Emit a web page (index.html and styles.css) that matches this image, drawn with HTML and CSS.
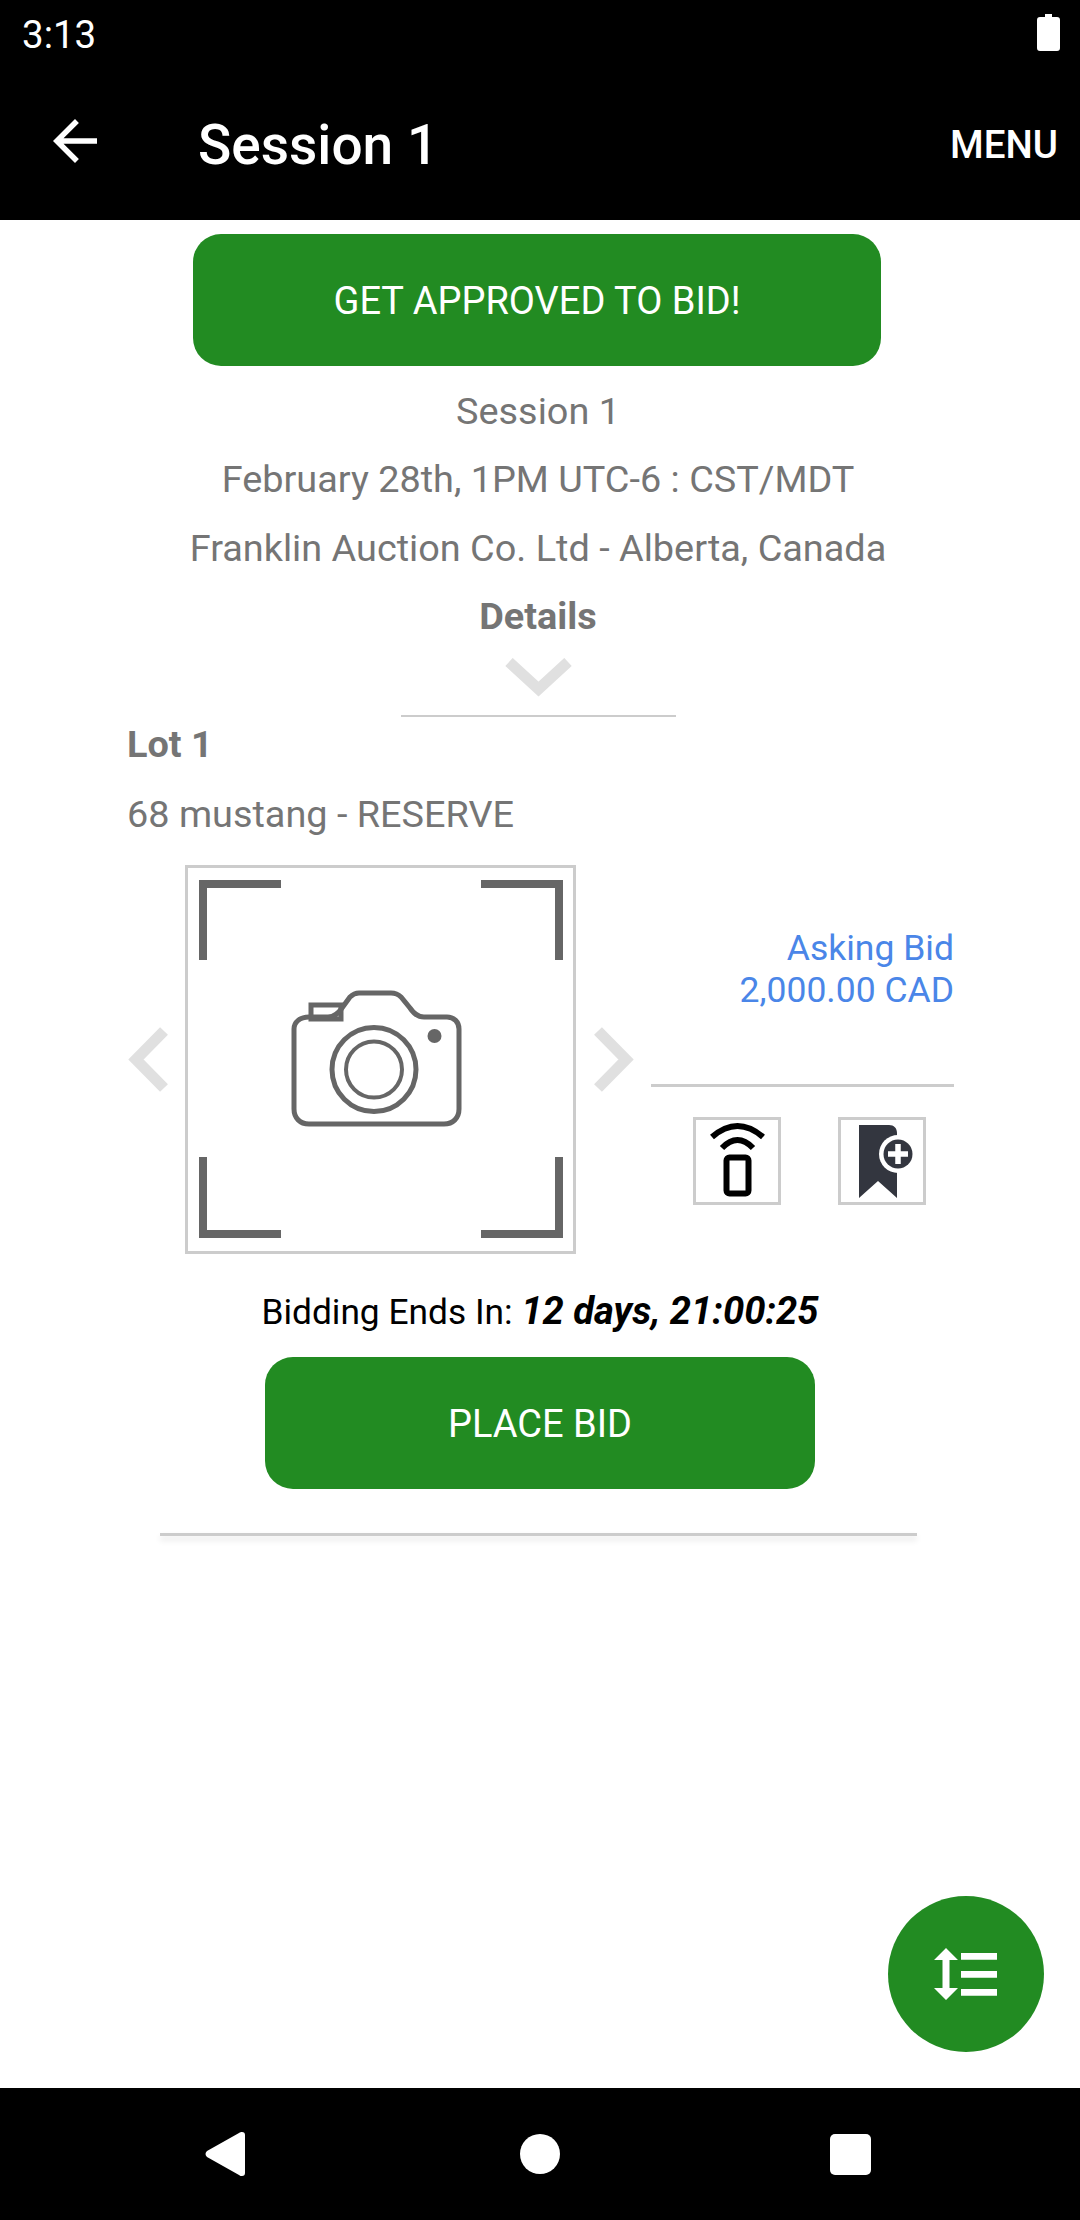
FILE: index.html
```html
<!DOCTYPE html>
<html lang="en">
<head>
<meta charset="utf-8">
<title>Session 1</title>
<link rel="stylesheet" href="styles.css">
</head>
<body>
<div class="page">
  <header class="header">
    <div class="status">
      <span class="time">3:13</span>
      <svg class="battery" viewBox="0 0 23 37"><path d="M8 0h7v3h5a3 3 0 0 1 3 3v28a3 3 0 0 1-3 3H3a3 3 0 0 1-3-3V6a3 3 0 0 1 3-3h5z"/></svg>
    </div>
    <div class="toolbar">
      <svg class="back" viewBox="0 0 24 24"><path d="M20 11H7.830l5.590-5.590L12 4l-8 8 8 8 1.410-1.410L7.830 13H20v-2z"/></svg>
      <span class="title">Session 1</span>
      <span class="menu">MENU</span>
    </div>
  </header>

  <main class="main">
    <div class="btn btn-approve">GET APPROVED TO BID!</div>
    <div class="info">
      <div class="info-row">Session 1</div>
      <div class="info-row">February 28th, 1PM UTC-6 : CST/MDT</div>
      <div class="info-row">Franklin Auction Co. Ltd - Alberta, Canada</div>
      <div class="info-row info-bold">Details</div>
      <svg class="chev-down" viewBox="0 0 67 40"><path d="M4 4l29.500 27L63 4"/></svg>
      <div class="info-line"></div>
    </div>

    <section class="lot">
      <div class="lot-name">Lot 1</div>
      <div class="lot-desc">68 mustang - RESERVE</div>
      <div class="gallery">
        <svg class="chev-side" viewBox="0 0 40 65"><path d="M36 4L8 32.500 36 61"/></svg>
        <div class="photo">
          <svg class="photo-art" viewBox="188 868 385 383">
            <path class="corner" d="M281 884H203V960M481 884H559V960M203 1157V1234H281M559 1157V1234H481"/>
            <path class="cam" d="M311 1005h30v14h-30z"/>
            <path class="cam" d="M309 1017h19c6 0 10-3 14-9l8-11c3-3 5-4 9-4h32c4 0 7 1 10 4l9 11c4 6 8 9 14 9h23c7 0 12 5 12 12v80c0 9-6 15-15 15H309c-9 0-15-6-15-15v-80c0-7 6-12 15-12z"/>
            <circle class="cam" cx="374" cy="1069.500" r="42"/>
            <circle class="cam cam-thin" cx="374" cy="1069.500" r="28"/>
            <circle class="cam-dot" cx="434.500" cy="1036" r="7"/>
          </svg>
        </div>
        <svg class="chev-side" viewBox="0 0 40 65"><path d="M4 4l28 28.500L4 61"/></svg>
        <div class="side">
          <div class="bid">
            <div>Asking Bid</div>
            <div>2,000.00 CAD</div>
          </div>
          <div class="side-line"></div>
          <div class="tools">
            <div class="tool">
              <svg class="tool-icon" viewBox="0 0 82 82">
                <path class="remote" d="M16 17Q41.500-5 67 17M26 28Q41.500 12 57 28"/>
                <rect class="remote" x="30.500" y="37.500" width="22" height="36" rx="3"/>
              </svg>
            </div>
            <div class="tool">
              <svg class="tool-icon" viewBox="0 0 82 82">
                <path class="mark" d="M18 5h30c5 0 8 3 8 8v65L37 61 18 78z"/>
                <circle class="mark-ring" cx="57" cy="34" r="19"/>
                <circle class="mark" cx="57" cy="34" r="14.500"/>
                <path class="mark-plus" d="M47 34h20M57 24v20"/>
              </svg>
            </div>
          </div>
        </div>
      </div>
      <div class="ends">Bidding Ends In: <b class="ends-left"><i>12 days, 21:00:25</i></b></div>
      <div class="btn btn-place">PLACE BID</div>
      <div class="lot-line"></div>
    </section>

    <div class="fab">
      <svg class="fab-icon" viewBox="0 0 63 52">
        <path d="M12 0l12 12h-8.500v28H24L12 52 0 40h8.500V12H0z"/>
        <path d="M27 5h36v6.700H27zM27 23h36v6.700H27zM27 41h36v6.700H27z"/>
      </svg>
    </div>
  </main>

  <nav class="nav">
    <svg class="nav-back" viewBox="0 0 40 44"><path d="M37 0c2 0 3 1 3 3v38c0 2-1 3-3 3-1 0-2 0-3-1L2 25c-2-2-2-4 0-6L34 1c1-1 2-1 3-1z"/></svg>
    <span class="nav-home"></span>
    <span class="nav-recent"></span>
  </nav>
</div>
</body>
</html>
```

FILE: styles.css
```css
* { box-sizing: border-box; }
html, body { margin: 0; padding: 0; background: #fff; }
body { font-family: Roboto, "Noto Sans", sans-serif; }
.page { width: 1080px; height: 2220px; display: flex; flex-direction: column; overflow: hidden; }

.header { background: #000; color: #fff; height: 220px; flex: none; }
.status { height: 66px; display: flex; justify-content: space-between; align-items: center; padding: 0 20px 0 22px; }
.time { font-size: 38.500px; padding-top: 2px; }
.battery { width: 23px; height: 37px; fill: #fff; margin-top: -1px; }
.toolbar { height: 154px; display: flex; align-items: center; }
.back { width: 66px; height: 66px; fill: #fff; margin-left: 42px; margin-top: -4px; flex: none; }
.title { font-size: 55px; font-weight: 500; margin-left: 90px; margin-top: 4px; }
.menu { font-size: 38.500px; font-weight: 500; margin-left: auto; margin-right: 22px; margin-top: 3px; }

.main { flex: 1; position: relative; display: flex; flex-direction: column; }

.btn { background: #228b22; color: #fff; border-radius: 28px; height: 132px; display: flex; align-items: center; justify-content: center; font-size: 38px; padding-top: 1px; }
.btn-approve { width: 688px; margin: 14px 0 0 193px; }

.info { width: 1076px; margin-top: 11px; display: flex; flex-direction: column; align-items: center; color: #757575; font-size: 37.850px; }
.info-row { line-height: 68.300px; white-space: nowrap; }
.info-bold { font-weight: 700; }
.chev-down { width: 67px; height: 40px; margin-top: 8px; fill: none; stroke: #e0e0e0; stroke-width: 11px; }
.info-line { width: 275px; height: 2px; background: #ccc; margin-top: 17px; }

.lot { padding-left: 127px; color: #757575; font-size: 37.850px; }
.lot-name { font-weight: 700; line-height: 50px; margin-top: 2px; }
.lot-desc { line-height: 50px; margin-top: 20px; }

.gallery { display: flex; align-items: center; margin: 26px 0 0 1px; }
.chev-side { width: 40px; height: 65px; flex: none; fill: none; stroke: #e0e0e0; stroke-width: 11px; }
.photo { width: 391px; height: 389px; flex: none; margin: 0 18px 0 17px; border: 3px solid #ccc; background: #fff; }
.photo-art { display: block; width: 385px; height: 383px; }
.corner { fill: none; stroke: #666; stroke-width: 8px; }
.cam { fill: none; stroke: #666; stroke-width: 5px; }
.cam-thin { stroke-width: 4px; }
.cam-dot { fill: #666; }

.side { width: 303px; height: 389px; margin-left: 17px; flex: none; }
.bid { margin-top: 62px; text-align: right; color: #4a86e8; line-height: 42px; white-space: nowrap; font-size: 35.500px; }
.side-line { height: 3px; background: #ccc; margin-top: 73px; }
.tools { display: flex; gap: 57px; margin: 30px 0 0 42px; }
.tool { width: 88px; height: 88px; border: 3px solid #ccc; background: #fff; }
.tool-icon { display: block; width: 82px; height: 82px; }
.remote { fill: none; stroke: #000; stroke-width: 6px; stroke-linecap: butt; }
.mark { fill: #33363f; }
.mark-ring { fill: #fff; }
.mark-plus { fill: none; stroke: #fff; stroke-width: 5.500px; }

.ends { width: 826px; margin-top: 32px; line-height: 50px; text-align: center; color: #000; white-space: nowrap; font-size: 35.300px; }
.ends-left { font-size: 38.200px; }
.btn-place { width: 550px; margin: 20px 0 0 138px; }
.lot-line { width: 757px; height: 3px; margin: 44px 0 0 33px; background: #ccc; box-shadow: 0 4px 6px rgba(0, 0, 0, 0.12); }

.fab { position: absolute; right: 36px; bottom: 36px; width: 156px; height: 156px; border-radius: 50%; background: #228b22; display: flex; align-items: center; justify-content: center; }
.fab-icon { width: 63px; height: 52px; fill: #fff; margin-right: 2px; }

.nav { background: #000; height: 132px; flex: none; position: relative; display: flex; align-items: center; }
.nav-back { width: 40px; height: 44px; fill: #fff; margin-left: 205px; flex: none; }
.nav-home { width: 40px; height: 40px; border-radius: 50%; background: #fff; margin-left: 275px; flex: none; }
.nav-recent { width: 41px; height: 41px; border-radius: 5px; background: #fff; margin-left: 270px; flex: none; }
```
